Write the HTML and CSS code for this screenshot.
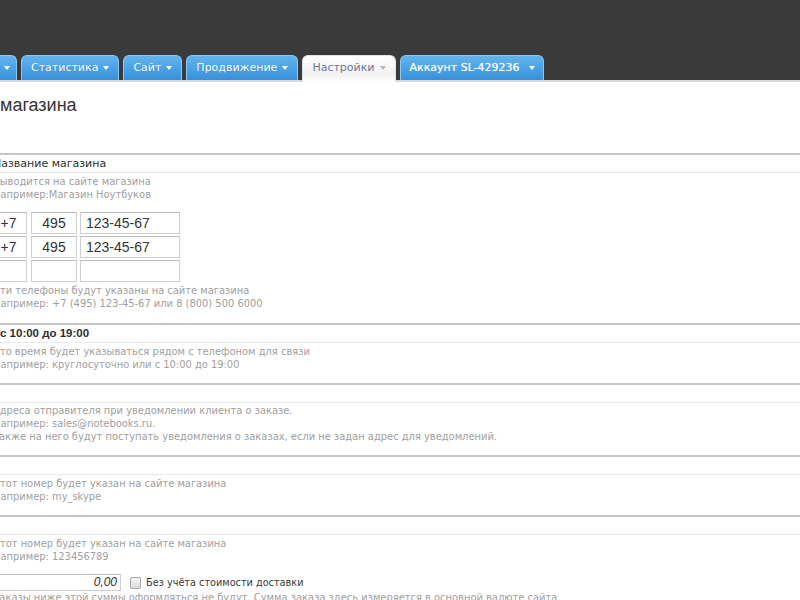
FILE: index.html
```html
<!DOCTYPE html>
<html lang="ru">
<head>
<meta charset="utf-8">
<title>Настройки магазина</title>
<link rel="stylesheet" href="styles.css">
</head>
<body>
<header class="header">
  <nav class="tabs">
    <a class="tab tab-cut"><span class="caret"></span></a>
    <a class="tab">Статистика<span class="caret"></span></a>
    <a class="tab">Сайт<span class="caret"></span></a>
    <a class="tab">Продвижение<span class="caret"></span></a>
    <a class="tab tab-active">Настройки<span class="caret"></span></a>
    <a class="tab tab-wide">Аккаунт SL-429236<span class="caret"></span></a>
  </nav>
</header>
<main class="content">
  <h1 class="title">магазина</h1>

  <section class="field">
    <div class="field-input">Название магазина</div>
    <div class="hint hint-first">
      <div>Выводится на сайте магазина</div>
      <div>Например:Магазин Ноутбуков</div>
    </div>
    <div class="phones">
      <div class="phone-row"><span class="box box-code">+7</span><span class="box box-area">495</span><span class="box box-num">123-45-67</span></div>
      <div class="phone-row"><span class="box box-code">+7</span><span class="box box-area">495</span><span class="box box-num">123-45-67</span></div>
      <div class="phone-row"><span class="box box-code"></span><span class="box box-area"></span><span class="box box-num"></span></div>
    </div>
    <div class="hint hint-phones">
      <div>Эти телефоны будут указаны на сайте магазина</div>
      <div>Например: +7 (495) 123-45-67 или 8 (800) 500 6000</div>
    </div>
  </section>

  <section class="field">
    <div class="field-input field-strong">с 10:00 до 19:00</div>
    <div class="hint">
      <div>Это время будет указываться рядом с телефоном для связи</div>
      <div>Например: круглосуточно или с 10:00 до 19:00</div>
    </div>
  </section>

  <section class="field">
    <div class="field-input"></div>
    <div class="hint hint-three">
      <div>Адреса отправителя при уведомлении клиента о заказе.</div>
      <div>Например: sales@notebooks.ru.</div>
      <div>Также на него будут поступать уведомления о заказах, если не задан адрес для уведомлений.</div>
    </div>
  </section>

  <section class="field">
    <div class="field-input"></div>
    <div class="hint">
      <div>Этот номер будет указан на сайте магазина</div>
      <div>Например: my_skype</div>
    </div>
  </section>

  <section class="field">
    <div class="field-input"></div>
    <div class="hint hint-last">
      <div>Этот номер будет указан на сайте магазина</div>
      <div>Например: 123456789</div>
    </div>
    <div class="amount-row">
      <span class="amount">0,00</span>
      <span class="checkbox"></span>
      <span class="amount-label">Без учёта стоимости доставки</span>
    </div>
    <div class="hint hint-amount">
      <div>Заказы ниже этой суммы оформляться не будут. Сумма заказа здесь измеряется в основной валюте сайта.</div>
    </div>
  </section>
</main>
</body>
</html>
```

FILE: styles.css
```css
html, body {
  margin: 0;
  padding: 0;
  background: #ffffff;
  overflow: hidden;
  width: 800px;
  height: 600px;
}

body {
  font-family: "DejaVu Sans", Verdana, sans-serif;
  color: #333333;
}

.header {
  height: 80px;
  background: #3a3a3a;
  border-bottom: 2px solid #d8d8d8;
  display: flex;
  align-items: flex-end;
}

.tabs {
  display: flex;
  align-items: flex-end;
  gap: 4px;
  height: 25px;
}

.tab {
  box-sizing: border-box;
  display: flex;
  align-items: center;
  height: 25px;
  padding: 0 9px 1px;
  font-size: 11px;
  color: #ffffff;
  background: linear-gradient(#63b4ee, #3690db);
  border: 1px solid #8fc9f1;
  border-bottom: none;
  border-radius: 6px 6px 0 0;
  text-shadow: 0 0 1px rgba(0, 60, 120, 0.3);
  white-space: nowrap;
}

.tab-cut {
  margin-left: -12px;
  padding: 0 6px 1px 10px;
}

.tab-active {
  background: linear-gradient(#ffffff, #f1f1f1 70%, #ffffff);
  color: #6c7a98;
  border-color: #e2e2e2;
  height: 27px;
  margin-bottom: -2px;
  padding-bottom: 3px;
  text-shadow: none;
}

.tab-wide {
  padding: 0 8px 1px 9px;
  text-shadow: 0 0 1px rgba(255, 255, 255, 0.6);
}

.caret {
  display: inline-block;
  width: 0;
  height: 0;
  margin-left: 5px;
  border-left: 3px solid transparent;
  border-right: 3px solid transparent;
  border-top: 4px solid #ffffff;
}

.tab-wide .caret {
  margin-left: 9px;
}

.tab-active .caret {
  border-top-color: #a9b6cc;
}

.content {
  margin-left: -10px;
}

.title {
  margin: 0;
  padding: 12px 0 0 10px;
  height: 71px;
  box-sizing: border-box;
  font-family: "Liberation Sans", Arial, sans-serif;
  font-weight: normal;
  font-size: 18px;
  line-height: 22px;
  color: #333333;
}

.field {
  border-top: 2px solid #c6c6c6;
}

.field-input {
  height: 17px;
  line-height: 17px;
  border-bottom: 1px solid #e9e9e9;
  font-size: 11px;
  color: #2e2e2e;
  padding-left: 3px;
}

.field-strong {
  font-family: "Liberation Sans", Arial, sans-serif;
  font-size: 11.5px;
  font-weight: bold;
  padding-left: 10px;
}

.hint {
  padding: 2px 0 12px 3px;
  font-family: "DejaVu Sans Condensed", "DejaVu Sans", sans-serif;
  font-stretch: condensed;
  font-size: 11px;
  line-height: 13px;
  color: #a0a0a0;
}

.hint-first {
  padding-bottom: 11px;
}

.hint-three {
  padding-top: 1px;
}

.hint-phones {
  padding-top: 2px;
  padding-bottom: 13px;
}

.hint-last {
  padding-bottom: 11px;
}

.hint-amount {
  padding-top: 0;
}

.phones {
  display: flex;
  flex-direction: column;
  gap: 2px;
}

.phone-row {
  display: flex;
  gap: 4px;
}

.box {
  box-sizing: border-box;
  height: 22px;
  line-height: 20px;
  border: 1px solid #cfcfcf;
  border-top-color: #bdbdbd;
  font-family: "Liberation Sans", Arial, sans-serif;
  font-size: 14px;
  color: #333333;
}

.box-code {
  width: 37px;
  text-align: center;
}

.box-area {
  width: 46px;
  text-align: center;
}

.box-num {
  width: 100px;
  padding-left: 5px;
  margin-left: -1px;
}

.amount-row {
  display: flex;
  align-items: center;
  height: 17px;
}

.amount {
  box-sizing: border-box;
  width: 131px;
  height: 17px;
  line-height: 15px;
  border: 1px solid #d0d0d0;
  border-top-color: #bcbcbc;
  text-align: right;
  padding-right: 3px;
  font-family: "Liberation Sans", Arial, sans-serif;
  font-style: italic;
  font-size: 12px;
  color: #333333;
}

.checkbox {
  box-sizing: border-box;
  width: 11px;
  height: 12px;
  margin-left: 9px;
  border: 1px solid #a8a8a8;
  border-radius: 2px;
  background: linear-gradient(#f4f4f4, #dcdcdc);
}

.amount-label {
  margin-left: 5px;
  font-family: "DejaVu Sans Condensed", "DejaVu Sans", sans-serif;
  font-stretch: condensed;
  font-size: 10.8px;
  color: #3a3a3a;
}
```
